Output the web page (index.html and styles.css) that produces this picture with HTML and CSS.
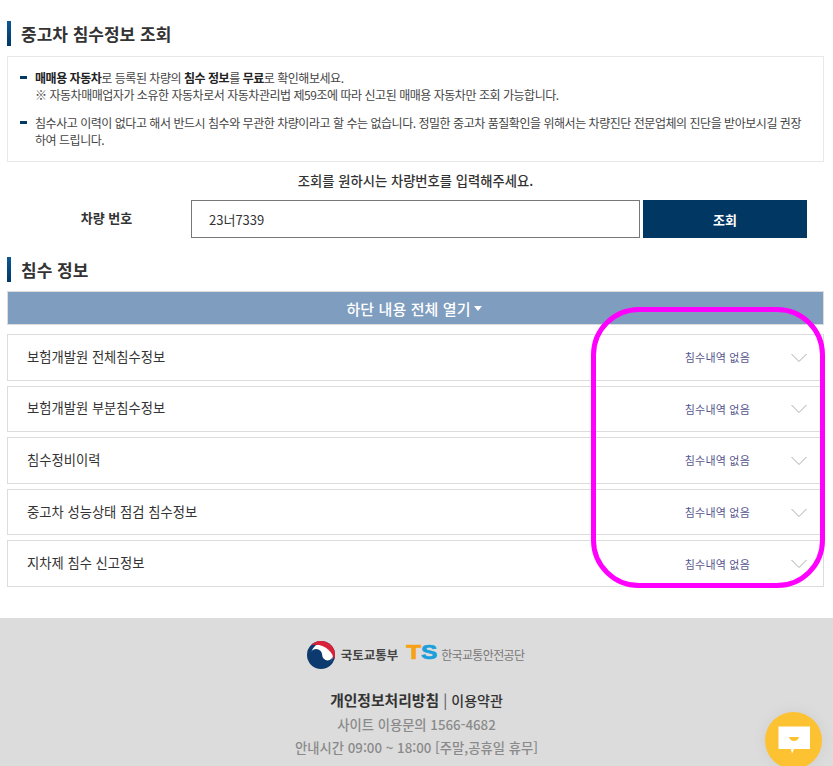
FILE: index.html
```html
<!DOCTYPE html>
<html lang="ko">
<head>
    <meta charset="UTF-8">
    <meta name="viewport" content="width=device-width, initial-scale=1.0">
    <title>중고차 침수정보 조회</title>
    <link rel="stylesheet" href="styles.css">
</head>
<body>
    <div class="container">
        <h2 class="section-title first">중고차 침수정보 조회</h2>

        <!-- 안내 문구 -->
        <div class="notice">
            <ul class="notice-list">
                <li>
                    <b>매매용 자동차</b>로 등록된 차량의 <b>침수 정보</b>를 <b>무료</b>로 확인해보세요.<br>
                    ※ 자동차매매업자가 소유한 자동차로서 자동차관리법 제59조에 따라 신고된 매매용 자동차만 조회 가능합니다.
                </li>
                <li>
                    침수사고 이력이 없다고 해서 반드시 침수와 무관한 차량이라고 할 수는 없습니다. 정밀한 중고차 품질확인을 위해서는 차량진단 전문업체의 진단을 받아보시길 권장하여 드립니다.
                </li>
            </ul>
        </div>

        <!-- 조회 폼 -->
        <p class="search-guide">조회를 원하시는 차량번호를 입력해주세요.</p>
        <div class="search-row">
            <label class="search-label" for="carNo">차량 번호</label>
            <input id="carNo" class="search-input" type="text" value="23너7339">
            <button class="search-button">조회</button>
        </div>

        <h2 class="section-title second">침수 정보</h2>

        <button class="open-all">하단 내용 전체 열기<span class="open-arrow"></span></button>

        <div class="accordion">
            <div class="accordion-row">
                <span class="row-name">보험개발원 전체침수정보</span>
                <span class="row-status">침수내역 없음</span>
                <svg class="row-chevron" viewBox="0 0 16 10"><path d="M0.5 1 L8 8.5 L15.5 1"/></svg>
            </div>
            <div class="accordion-row">
                <span class="row-name">보험개발원 부분침수정보</span>
                <span class="row-status">침수내역 없음</span>
                <svg class="row-chevron" viewBox="0 0 16 10"><path d="M0.5 1 L8 8.5 L15.5 1"/></svg>
            </div>
            <div class="accordion-row">
                <span class="row-name">침수정비이력</span>
                <span class="row-status">침수내역 없음</span>
                <svg class="row-chevron" viewBox="0 0 16 10"><path d="M0.5 1 L8 8.5 L15.5 1"/></svg>
            </div>
            <div class="accordion-row">
                <span class="row-name">중고차 성능상태 점검 침수정보</span>
                <span class="row-status">침수내역 없음</span>
                <svg class="row-chevron" viewBox="0 0 16 10"><path d="M0.5 1 L8 8.5 L15.5 1"/></svg>
            </div>
            <div class="accordion-row">
                <span class="row-name">지차제 침수 신고정보</span>
                <span class="row-status">침수내역 없음</span>
                <svg class="row-chevron" viewBox="0 0 16 10"><path d="M0.5 1 L8 8.5 L15.5 1"/></svg>
            </div>
        </div>
    </div>

    <!-- 푸터 -->
    <div class="footer">
        <div class="footer-logos">
            <svg class="logo-mark" viewBox="0 0 28 28">
                <circle cx="14" cy="14" r="14" fill="#0d3a6e"/>
                <circle cx="15.2" cy="13.5" r="11" fill="#fff"/>
                <path d="M3 14 A6 6 0 0 1 15.2 14 A5.3 5.3 0 0 0 26 14 A11.5 11.5 0 0 1 3 14 Z" fill="#0d3a6e"/>
                <path d="M4 4.2 A14 14 0 0 1 28 14 Q28 17 27 19 C26 10 16 1.5 4 4.2 Z" fill="#d9213a"/>
            </svg>
            <span class="logo-ministry">국토교통부</span>
            <span class="logo-ts"><i class="ts-t">T</i><i class="ts-s">S</i></span>
            <span class="logo-kotsa">한국교통안전공단</span>
        </div>
        <p class="footer-links"><b>개인정보처리방침</b> <span class="footer-sep">|</span> <span class="footer-terms">이용약관</span></p>
        <p class="footer-info">사이트 이용문의 1566-4682</p>
        <p class="footer-info">안내시간 09:00 ~ 18:00 [주말,공휴일 휴무]</p>
    </div>

    <!-- 채팅 버튼 -->
    <div class="chat-button">
        <svg class="chat-icon" viewBox="0 0 32 28">
            <path d="M0.5 0.5 H32 V23 H16 L14 27.5 L13 23 H0.5 Z" fill="#fff"/>
            <path d="M11 11 H21 Q20 15 16 15 Q12 15 11 11 Z" fill="#fdc231"/>
        </svg>
    </div>

    <!-- 강조 표시 -->
    <div class="highlight"></div>
</body>
</html>
```

FILE: styles.css
```css
/* 기본 설정 */
* {
    margin: 0;
    padding: 0;
    box-sizing: border-box;
}

html, body {
    height: 766px;
    overflow: hidden;
}

body {
    font-family: "Noto Sans CJK KR", "Noto Sans", sans-serif;
    color: #333;
    background: #fff;
    position: relative;
}

.container {
    padding: 0 9px 0 7px;
}

/* 섹션 제목 */
.section-title {
    border-left: 4px solid #0b4a80;
    border-image: linear-gradient(to bottom, #0d5a96, #013660) 1;
    padding-left: 10px;
    height: 25px;
    line-height: 25px;
    font-size: 17px;
    font-weight: 700;
    color: #333;
}

.section-title.first {
    margin-top: 21px;
}

.section-title.second {
    margin-top: 19px;
}

/* 안내 박스 */
.notice {
    margin-top: 10px;
    height: 106px;
    border: 1px solid #e8e8e8;
    padding: 12px 12px 0;
}

.notice-list {
    list-style: none;
}

.notice-list li {
    position: relative;
    padding-left: 15px;
    font-size: 12px;
    line-height: 17px;
    letter-spacing: -0.47px;
    color: #444;
    margin-bottom: 11px;
}

.notice-list li::before {
    content: "";
    position: absolute;
    left: 0;
    top: 7px;
    width: 7px;
    height: 3px;
    background: #023a66;
}

.notice-list b {
    color: #222;
}

/* 조회 폼 */
.search-guide {
    margin-top: 10px;
    text-align: center;
    font-size: 13.3px;
    line-height: 18px;
    font-weight: 500;
    color: #333;
}

.search-row {
    display: flex;
    align-items: stretch;
    margin-top: 10px;
    height: 38px;
}

.search-label {
    width: 184px;
    padding-left: 15px;
    line-height: 36px;
    text-align: center;
    font-size: 13px;
    font-weight: 700;
    color: #333;
}

.search-input {
    width: 449px;
    margin-right: 3px;
    border: 1px solid #777;
    padding: 0 17px;
    font-family: inherit;
    font-size: 13px;
    color: #333;
    outline: none;
}

.search-button {
    width: 164px;
    border: none;
    background: #013763;
    color: #fff;
    font-family: inherit;
    font-size: 13px;
    font-weight: 700;
}

/* 전체 열기 */
.open-all {
    display: flex;
    align-items: center;
    justify-content: center;
    width: 100%;
    height: 34px;
    margin-top: 9px;
    padding-right: 3px;
    border: 1px solid #dcdcdc;
    background: #7f9dbf;
    color: #fff;
    font-family: inherit;
    font-size: 15px;
    font-weight: 500;
    letter-spacing: 0.1px;
}

.open-arrow {
    margin-left: 3px;
    border-left: 4px solid transparent;
    border-right: 4px solid transparent;
    border-top: 5px solid #fff;
}

/* 아코디언 */
.accordion {
    margin-top: 9px;
    display: flex;
    flex-direction: column;
    gap: 5px;
}

.accordion-row {
    display: flex;
    align-items: center;
    height: 46.6px;
    border: 1px solid #dcdcdc;
    padding: 0 16px 2px 19px;
}

.row-name {
    flex: 1;
    font-size: 13.3px;
    color: #333;
}

.row-status {
    font-size: 11px;
    letter-spacing: 0.2px;
    color: #55558c;
    margin-top: 2px;
    margin-right: 41px;
}

.row-chevron {
    width: 16px;
    height: 10px;
    margin-top: 3px;
    fill: none;
    stroke: #aaa;
    stroke-width: 1;
}

/* 푸터 */
.footer {
    margin-top: 31px;
    height: 148px;
    background: #dcdcdc;
    padding-top: 23px;
    text-align: center;
}

.footer-logos {
    display: flex;
    align-items: center;
    justify-content: center;
    height: 28px;
    margin-right: 2px;
}

.logo-mark {
    width: 28px;
    height: 28px;
    margin-right: 6px;
}

.logo-ministry {
    font-size: 12.5px;
    font-weight: 700;
    color: #444;
    margin-right: 3px;
}

.logo-ts {
    display: inline-block;
    width: 34px;
    margin-right: 6px;
    margin-top: -5px;
    font-family: "Liberation Sans", sans-serif;
    font-size: 20px;
    font-weight: 700;
    line-height: 20px;
    white-space: nowrap;
    -webkit-text-stroke: 0.7px;
    transform: scaleX(1.22);
    transform-origin: left center;
}

.logo-ts i {
    font-style: normal;
}

.ts-t {
    color: #f7a215;
}

.ts-s {
    color: #1a9fdc;
}

.logo-kotsa {
    font-size: 12px;
    color: #777;
    letter-spacing: -0.65px;
}

.footer-links {
    margin-top: 19px;
    font-size: 14.8px;
    line-height: 24px;
    color: #333;
}

.footer-sep {
    font-weight: 400;
    color: #555;
}

.footer-terms {
    font-size: 14px;
    font-weight: 500;
}

.footer-info {
    position: relative;
    top: 1px;
    font-size: 13.3px;
    line-height: 23px;
    font-weight: 500;
    color: #8a8a8a;
}

/* 떠 있는 요소 */
.chat-button {
    position: absolute;
    left: 765px;
    top: 712px;
    width: 57px;
    height: 57px;
    border-radius: 50%;
    background: #fdc231;
    display: flex;
    align-items: center;
    justify-content: center;
    box-shadow: 0 0 16px rgba(0, 0, 0, 0.06);
}

.chat-icon {
    width: 32px;
    height: 28px;
    margin-top: -1px;
}

.highlight {
    position: absolute;
    left: 591px;
    top: 307px;
    width: 234px;
    height: 281px;
    border: 5px solid #ff00ff;
    border-radius: 48px;
    pointer-events: none;
}
```
